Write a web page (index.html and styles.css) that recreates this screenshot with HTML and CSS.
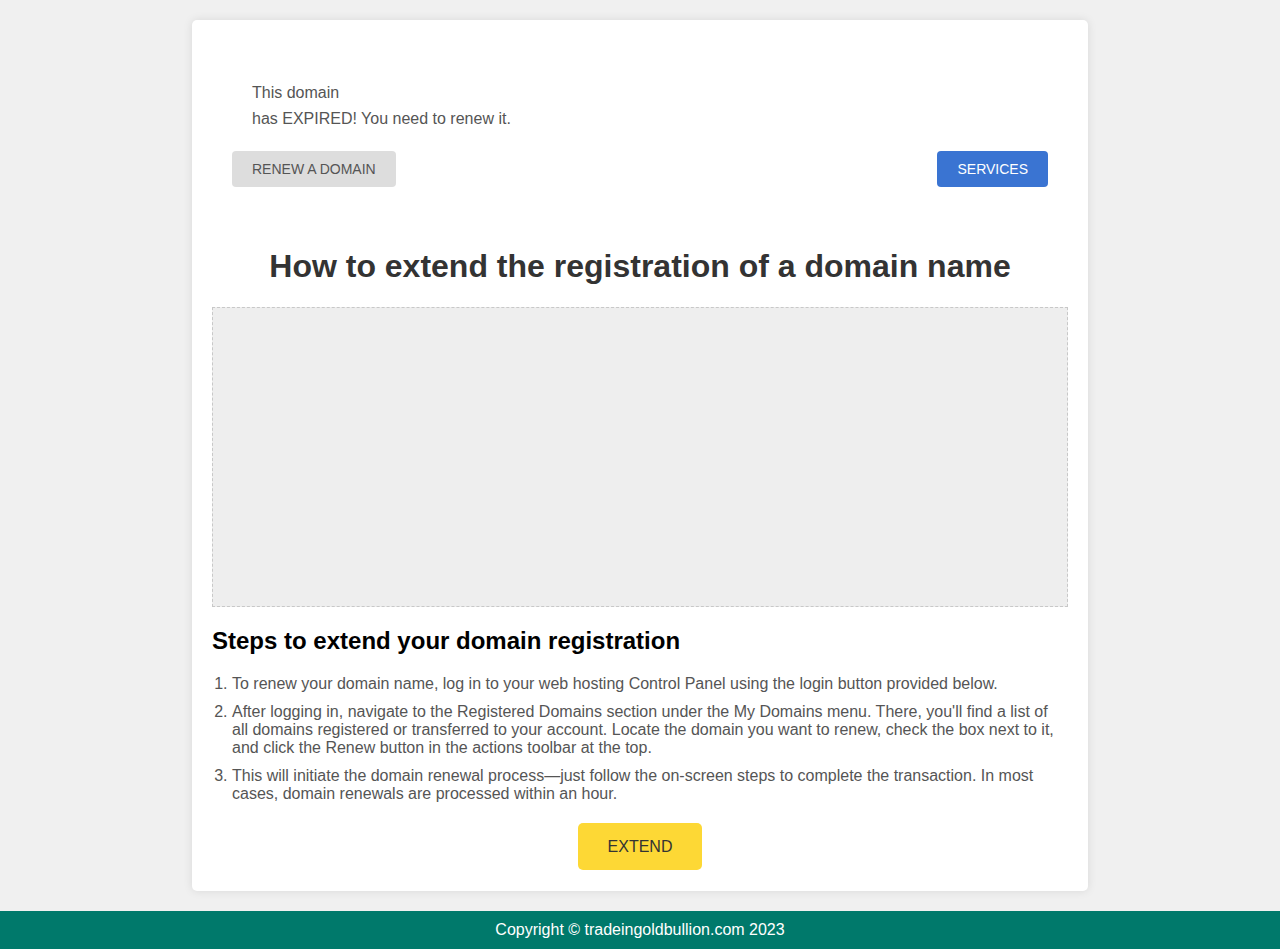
FILE: index.html
```html
<!DOCTYPE html>
<html lang="en">
<head>
<meta charset="utf-8">
<title>Domain expired</title>
<link rel="stylesheet" href="styles.css">
</head>
<body>
<div class="card">
  <div class="notice">
    <div class="notice-text">
      <p>This domain</p>
      <p>has EXPIRED! You need to renew it.</p>
    </div>
    <div class="notice-actions">
      <a class="btn btn-grey" href="#">RENEW A DOMAIN</a>
      <a class="btn btn-blue" href="#">SERVICES</a>
    </div>
  </div>
  <h1 class="title">How to extend the registration of a domain name</h1>
  <div class="placeholder"></div>
  <h2 class="subtitle">Steps to extend your domain registration</h2>
  <ol class="steps">
    <li>To renew your domain name, log in to your web hosting Control Panel using the login button provided below.</li>
    <li>After logging in, navigate to the Registered Domains section under the My Domains menu. There, you'll find a list of all domains registered or transferred to your account. Locate the domain you want to renew, check the box next to it, and click the Renew button in the actions toolbar at the top.</li>
    <li>This will initiate the domain renewal process—just follow the on-screen steps to complete the transaction. In most cases, domain renewals are processed within an hour.</li>
  </ol>
  <div class="cta">
    <a class="btn-extend" href="#">EXTEND</a>
  </div>
</div>
<footer class="footer">Copyright © tradeingoldbullion.com 2023</footer>
</body>
</html>
```

FILE: styles.css
```css
html, body {
  margin: 0;
  padding: 0;
}
body {
  background: #f0f0f0;
  font-family: "Liberation Sans", Arial, sans-serif;
  color: #555;
  font-size: 16px;
}
.card {
  width: 856px;
  margin: 20px auto 20px;
  padding: 20px 20px 21px;
  background: #fff;
  border-radius: 5px;
  box-shadow: 0 0 10px rgba(0, 0, 0, 0.1);
}
.notice {
  padding: 20px;
}
.notice-text {
  padding: 20px 20px 19px;
}
.notice-text p {
  margin: 0;
  line-height: 26px;
}
.notice-actions {
  display: flex;
  justify-content: space-between;
  align-items: center;
}
.btn {
  display: inline-block;
  padding: 0 20px;
  height: 36px;
  line-height: 36px;
  font-size: 14px;
  text-decoration: none;
  border-radius: 4px;
}
.btn-grey {
  background: #dddddd;
  color: #555;
}
.btn-blue {
  background: #3a74d2;
  color: #fff;
}
.title {
  margin: 41px 0 22px;
  text-align: center;
  font-size: 32px;
  line-height: 37px;
  color: #333;
}
.placeholder {
  height: 298px;
  background: #eeeeee;
  border: 1px dashed #c8c8c8;
}
.subtitle {
  margin: 20px 0 21px;
  font-size: 24px;
  line-height: 27px;
  color: #000;
}
.steps {
  margin: 0 0 20px;
  padding-left: 20px;
  line-height: 18px;
}
.steps li + li {
  margin-top: 10px;
}
.cta {
  display: flex;
  justify-content: center;
}
.btn-extend {
  display: block;
  width: 124px;
  height: 47px;
  line-height: 47px;
  text-align: center;
  background: #fdd835;
  color: #333;
  font-size: 16px;
  text-decoration: none;
  border-radius: 5px;
}
.footer {
  background: #00796b;
  color: #fff;
  text-align: center;
  height: 38px;
  line-height: 37px;
  font-size: 16px;
}
```
